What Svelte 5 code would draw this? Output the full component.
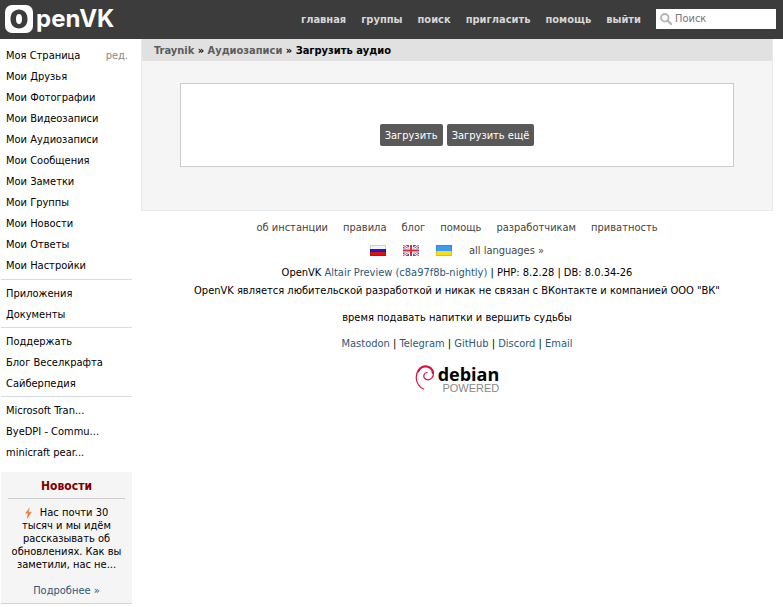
<script lang="ts">
  type Item = { title: string; edit?: boolean };

  const menu: Item[][] = [
    [
      { title: 'Моя Страница', edit: true },
      { title: 'Мои Друзья' },
      { title: 'Мои Фотографии' },
      { title: 'Мои Видеозаписи' },
      { title: 'Мои Аудиозаписи' },
      { title: 'Мои Сообщения' },
      { title: 'Мои Заметки' },
      { title: 'Мои Группы' },
      { title: 'Мои Новости' },
      { title: 'Мои Ответы' },
      { title: 'Мои Настройки' },
    ],
    [{ title: 'Приложения' }, { title: 'Документы' }],
    [{ title: 'Поддержать' }, { title: 'Блог Веселкрафта' }, { title: 'Сайберпедия' }],
    [{ title: 'Microsoft Tran...' }, { title: 'ByeDPI - Commu...' }, { title: 'minicraft pear...' }],
  ];

  const topLinks = ['главная', 'группы', 'поиск', 'пригласить', 'помощь', 'выйти'];
  const footerLinks = ['об инстанции', 'правила', 'блог', 'помощь', 'разработчикам', 'приватность'];
  const social = ['Mastodon', 'Telegram', 'GitHub', 'Discord', 'Email'];

  let query = '';
</script>

<header>
  <a class="logo" href="#home" aria-label="OpenVK">
    <svg width="28" height="28" viewBox="0 0 28 28">
      <rect width="28" height="28" rx="7" fill="#fff" />
      <path fill="#3c3c3c" fill-rule="evenodd" d="M14 4.500C9 4.500 5.500 8 5.500 14S9 23.500 14 23.500s8.500-3.500 8.500-9.500S19 4.500 14 4.500zm0 4.500c2 0 3 1.800 3 5s-1 5-3 5-3-1.800-3-5 1-5 3-5z" />
    </svg>
    <span>penVK</span>
  </a>
  <nav class="top">
    {#each topLinks as link}
      <a href="#top">{link}</a>
    {/each}
  </nav>
  <label class="search">
    <svg width="12" height="12" viewBox="0 0 12 12">
      <circle cx="4.800" cy="4.800" r="3.800" fill="none" stroke="#b4b4b4" stroke-width="1.800" />
      <path d="M7.800 7.800L11 11" stroke="#b4b4b4" stroke-width="2.200" stroke-linecap="round" />
    </svg>
    <input type="search" placeholder="Поиск" aria-label="Поиск" bind:value={query} />
  </label>
</header>

<div class="layout">
  <aside>
    <nav class="menu">
      {#each menu as group}
        <ul>
          {#each group as item}
            <li>
              <a href="#page">{item.title}</a>
              {#if item.edit}<a class="edit" href="#edit">ред.</a>{/if}
            </li>
          {/each}
        </ul>
      {/each}
    </nav>
    <section class="news">
      <h2>Новости</h2>
      <p>
        <svg width="7" height="12" viewBox="0 0 7 12">
          <defs>
            <linearGradient id="bolt" x1="0" y1="0" x2="0" y2="1">
              <stop offset="0" stop-color="#ffa84a" />
              <stop offset="1" stop-color="#f05a3c" />
            </linearGradient>
          </defs>
          <path d="M4.800 0L0 6.500h2.800L1.800 12 7 4.800H4z" fill="url(#bolt)" />
        </svg>
        Нас почти 30 тысяч и мы идём рассказывать об обновлениях. Как вы заметили, нас не...
      </p>
      <a href="#news">Подробнее »</a>
    </section>
  </aside>

  <div class="page">
    <main>
      <h1><a href="#user">Traynik</a> » <a href="#audios">Аудиозаписи</a> » Загрузить аудио</h1>
      <div class="upload">
        <button type="button">Загрузить</button>
        <button type="button">Загрузить ещё</button>
      </div>
    </main>

    <footer>
      <nav class="links">
        {#each footerLinks as link}
          <a href="#about">{link}</a>
        {/each}
      </nav>
      <div class="languages">
        <a href="#ru" aria-label="Русский">
          <svg width="16" height="11" viewBox="0 0 16 11">
            <path fill="#f4f4f4" d="M0 0h16v4H0z" />
            <path fill="#1b1bcf" d="M0 4h16v3H0z" />
            <path fill="#e01010" d="M0 7h16v4H0z" />
            <path d="M.5.5h15v10H.5z" fill="none" stroke="#000" stroke-opacity=".15" />
          </svg>
        </a>
        <a href="#en" aria-label="English">
          <svg width="16" height="11" viewBox="0 0 16 11">
            <path fill="#3d5fb0" d="M0 0h16v11H0z" />
            <path d="M0 0l16 11M16 0L0 11" stroke="#fff" stroke-width="2.600" />
            <path d="M0 0l16 11M16 0L0 11" stroke="#dc4050" stroke-width="1" />
            <path d="M8 0v11M0 5.500h16" stroke="#fff" stroke-width="4" />
            <path d="M8 0v11M0 5.500h16" stroke="#d82c3c" stroke-width="2" />
          </svg>
        </a>
        <a href="#uk" aria-label="Українська">
          <svg width="16" height="11" viewBox="0 0 16 11">
            <path fill="#3a9cf0" d="M0 0h16v6H0z" />
            <path fill="#fbdc10" d="M0 6h16v5H0z" />
            <path d="M.5.5h15v10H.5z" fill="none" stroke="#000" stroke-opacity=".12" />
          </svg>
        </a>
        <a href="#languages">all languages »</a>
      </div>
      <p>OpenVK <a href="#version">Altair Preview (c8a97f8b-nightly)</a> | PHP: 8.2.28 | DB: 8.0.34-26</p>
      <p>OpenVK является любительской разработкой и никак не связан с ВКонтакте и компанией ООО "ВК"</p>
      <p class="motto">время подавать напитки и вершить судьбы</p>
      <p>
        {#each social as name, i}{#if i}{' | '}{/if}<a href="#social">{name}</a>{/each}
      </p>
      <a class="debian" href="#debian" aria-label="debian powered">
        <svg width="20" height="25" viewBox="0 0 20 25">
          <path d="M8.500 24C4.500 22.500 1.200 18 1.200 12.500 1.200 6 5 1.500 10.500 1.200 15 1 18.300 4 18.500 8c.2 4-2.500 6.800-5.500 6.800-3.200 0-4.800-2.600-4-5C9.500 8.300 10.800 7.500 12 7.500" fill="none" stroke="#e0103c" stroke-width="1.200" stroke-linecap="round" />
          <path d="M3.200 6.500C5 2.800 8 1.200 11 1.500c3.500.3 6.500 3 6.800 6.500" fill="none" stroke="#e0103c" stroke-width="2" stroke-linecap="round" />
        </svg>
        <span class="wordmark">
          <span class="brand">debian</span>
          <span class="powered">POWERED</span>
        </span>
      </a>
    </footer>
  </div>
</div>

<style>
  :global(body) {
    background: #fff;
    color: #000;
    font: 11px/13px "DejaVu Sans Condensed", Tahoma, sans-serif;
  }
  a { color: #2b587a; text-decoration: none; }
  a:hover { text-decoration: underline; }
  h1, h2, p, ul { margin: 0; padding: 0; }
  svg { display: block; }

  header {
    display: flex;
    align-items: center;
    height: 39px;
    padding: 0 7px 2px 5px;
    box-sizing: border-box;
    background: #3c3c3c;
  }
  .logo {
    display: flex;
    align-items: center;
    gap: 3px;
    color: #fff;
    font: bold 24px/28px Inter, sans-serif;
  }
  .top {
    display: flex;
    gap: 15px;
    margin: 2px 15px 0 auto;
    font-weight: bold;
  }
  .top a { color: #d6d6d6; }
  .search {
    display: flex;
    align-items: center;
    gap: 3px;
    width: 120px;
    height: 20px;
    padding-left: 4px;
    box-sizing: border-box;
    background: #fff;
  }
  .search input {
    flex: 1;
    min-width: 0;
    padding: 0;
    border: 0;
    outline: 0;
    background: none;
    font: inherit;
  }
  .search input::placeholder { color: #757575; }

  .layout {
    display: flex;
    align-items: flex-start;
    gap: 9px;
    padding-right: 10px;
  }
  aside {
    flex: none;
    width: 131px;
    padding: 6px 0 0 1px;
  }
  .menu ul { list-style: none; }
  .menu ul:first-child { padding-bottom: 1px; }
  .menu ul + ul {
    margin-top: 2px;
    padding-top: 3px;
    border-top: 1px solid #d9dde0;
  }
  .menu li {
    display: flex;
    justify-content: space-between;
    padding: 0 4px 0 5px;
    line-height: 21px;
  }
  .menu a { color: #000; }
  .menu .edit { color: #888; }

  .news {
    margin-top: 9px;
    padding: 7px 7px 6px;
    border-bottom: 1px solid #d5d5d5;
    background: #f5f5f5;
    text-align: center;
  }
  .news h2 {
    padding-bottom: 4px;
    border-bottom: 1px solid #ccc;
    color: #800000;
    font-size: 12px;
    line-height: 15px;
  }
  .news p { margin: 7px 0 13px; }
  .news svg {
    display: inline-block;
    margin-right: 5px;
    vertical-align: -3px;
  }

  .page { flex: 1; min-width: 0; }
  main {
    padding-bottom: 43px;
    border: 1px solid #e4eaee;
    border-top: 0;
    background: #f5f5f5;
  }
  h1 {
    padding: 1px 12px 0;
    background: #e1e1e1;
    font-size: 11px;
    line-height: 21px;
  }
  h1 a { color: #5c5c5c; }
  .upload {
    display: flex;
    justify-content: center;
    gap: 4px;
    margin: 22px 38px 0;
    padding: 40px 0 20px;
    border: 1px solid #ccc;
    background: #fff;
  }
  button {
    height: 22px;
    padding: 1px 5px 0;
    border: 0;
    border-radius: 2px;
    background: #595959;
    color: #fff;
    font: inherit;
    cursor: pointer;
  }

  footer {
    padding-top: 10px;
    text-align: center;
  }
  .links, .languages {
    display: flex;
    justify-content: center;
    align-items: center;
  }
  .links { gap: 15px; }
  .languages { gap: 17px; margin: 10px 0 7px; }
  .links a, .languages a { color: #444; }
  footer p { line-height: 18px; }
  footer .motto { margin: 9px 0 8px; }
  .debian {
    display: flex;
    justify-content: center;
    gap: 3px;
    margin-top: 12px;
    color: #000;
  }
  .wordmark {
    display: flex;
    flex-direction: column;
    align-items: flex-end;
  }
  .brand { font: bold 18px/18px "Open Sans", sans-serif; }
  .powered { color: #888; font: 11px/10px "Liberation Sans", sans-serif; }
</style>
